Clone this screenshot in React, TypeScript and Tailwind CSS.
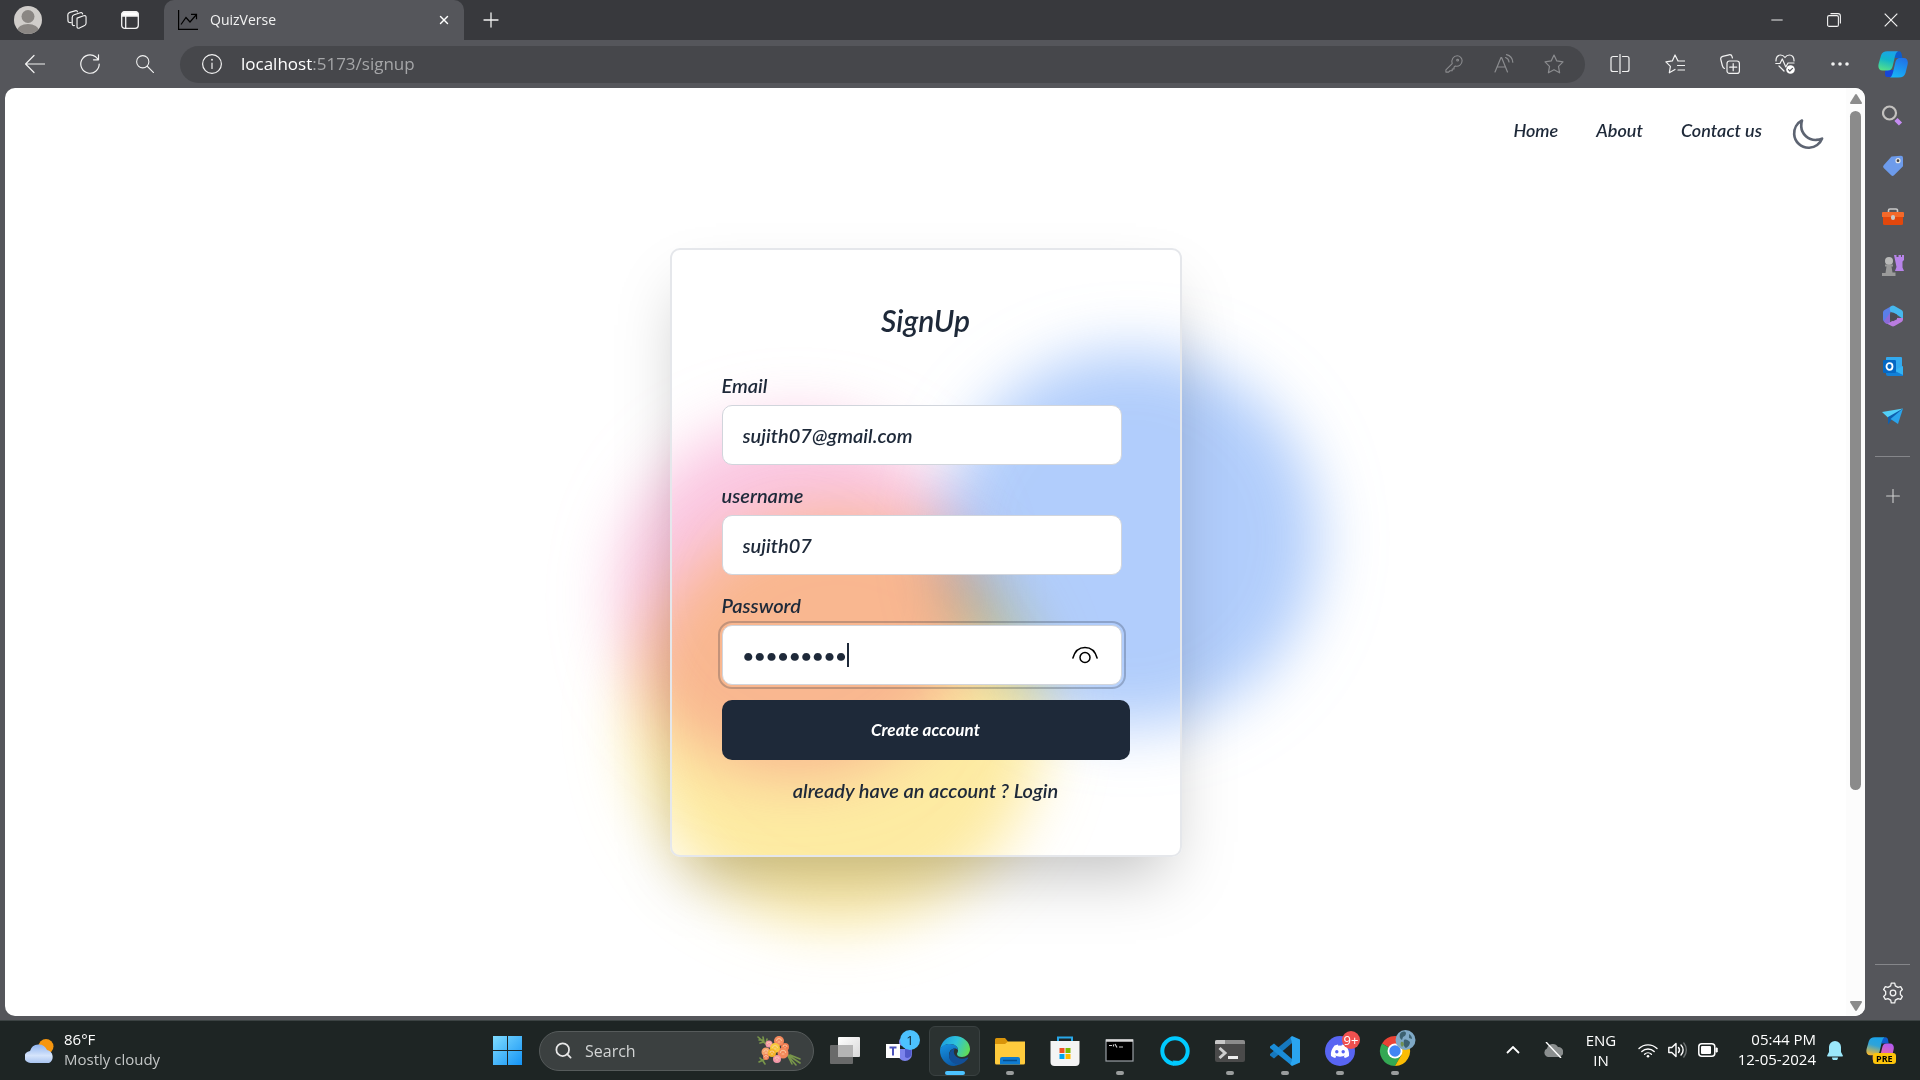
import React from "react";
import { X, Plus, Minus, Search } from "lucide-react";

const line = { fill: "none", stroke: "currentColor", strokeWidth: 1.2, strokeLinecap: "round", strokeLinejoin: "round" } as const;

function Ico({ d, size = 20, children, className = "" }: { d?: string; size?: number; children?: React.ReactNode; className?: string }) {
  return (
    <svg viewBox="0 0 20 20" width={size} height={size} className={className} {...line} aria-hidden="true">
      {d && <path d={d} />}
      {children}
    </svg>
  );
}

const STAR = "M10 1l2.8 5.9 6.2.9-4.5 4.5 1.1 6.5L10 15.7l-5.6 3.1 1.1-6.5L1 7.8l6.2-.9z";

function TabStrip() {
  return (
    <div className="flex h-10 items-end bg-[#38393d] text-[#f2f2f2]">
      <div className="flex h-10 w-[164px] shrink-0 items-center">
        <button aria-label="Profile" className="ml-[14px]">
          <svg viewBox="0 0 28 28" width="28" height="28">
            <clipPath id="av"><circle cx="14" cy="14" r="14" /></clipPath>
            <g clipPath="url(#av)">
              <rect width="28" height="28" fill="#d0cdca" />
              <circle cx="14" cy="10.500" r="6.500" fill="#8a8683" />
              <ellipse cx="14" cy="25" rx="11" ry="7" fill="#8a8683" />
            </g>
          </svg>
        </button>
        <button aria-label="Workspaces" className="ml-[25px]">
          <Ico>
            <path d="M9.500 7.500l7-2.500c1.500-.5 2.500 0 2.500 1.500v6.500c0 1.500-.5 2-2 2.500l-5 2.500c-1.500.5-2.500 0-2.500-1.500V9z" transform="translate(1 1) scale(.95)" />
            <path d="M7.500 15.500c-1.500.3-2.300-.3-2.300-1.800V7.500c0-1.500.5-2.300 2-2.800l6-2c1.300-.4 2.200 0 2.400 1.200M4 12.500c-1.800.3-2.800-.2-3-1.700L.8 5c0-1.500.5-2.300 2-2.700L8 .8c1.300-.4 2.200 0 2.400 1" />
          </Ico>
        </button>
        <button aria-label="Tab actions" className="ml-[34px]">
          <svg viewBox="0 0 18 18" width="18" height="18" fill="none" stroke="#f2f2f2" strokeWidth="1.300">
            <rect x=".7" y=".7" width="16.600" height="16.600" rx="3" />
            <path d="M1 3.500a2.500 2.500 0 012.500-2.500h11a2.500 2.500 0 012.500 2.500V5H1z" fill="#fff" />
            <path d="M4.700 5v12" />
          </svg>
        </button>
      </div>
      <div className="flex h-10 w-[300px] items-center rounded-t-[10px] bg-[#55565b] pl-[14px] pr-[13px]">
        <svg viewBox="0 0 20 20" width="20" height="20" fill="none" stroke="#000" strokeWidth="1.200">
          <path d="M.6 0v19.400H20M3 14.500l5-7 4 4.500 6.500-7.500M13 4.300h5.500v5" />
        </svg>
        <span className="ml-3 pb-px text-[14px]">QuizVerse</span>
        <button aria-label="Close tab" className="ml-auto text-white"><X size={14} strokeWidth={2.400} /></button>
      </div>
      <button aria-label="New tab" className="flex h-10 w-[54px] items-center justify-center"><Plus size={24} strokeWidth={1.300} /></button>
      <div className="mr-px ml-auto flex h-10 items-center">
        <button aria-label="Minimize" className="flex w-[57px] justify-center"><Minus size={18} strokeWidth={1.300} /></button>
        <button aria-label="Restore" className="flex w-[57px] justify-center">
          <svg viewBox="0 0 14 14" width="14" height="14" fill="none" stroke="currentColor" strokeWidth="1.100"><rect x=".6" y="2.600" width="10.800" height="10.800" rx="1.500" /><path d="M3.500.6H11A2.400 2.400 0 0113.400 3v7.500" /></svg>
        </button>
        <button aria-label="Close" className="flex w-[57px] justify-center">
          <svg viewBox="0 0 14 14" width="14" height="14" stroke="currentColor" strokeWidth="1.200"><path d="M.7.7l12.600 12.600M13.300.7L.7 13.300" /></svg>
        </button>
      </div>
    </div>
  );
}

function Copilot({ size, warm = false }: { size: number; warm?: boolean }) {
  const id = warm ? "w" : "c";
  return (
    <svg viewBox="0 0 30 27" width={size} height={size * 0.9} aria-hidden="true">
      <defs>
        <linearGradient id={id + "a"} x1=".6" y1="0" x2=".3" y2="1">
          <stop offset="0" stopColor="#1aa3ea" /><stop offset=".45" stopColor={warm ? "#2fa3d8" : "#12b5c9"} /><stop offset="1" stopColor={warm ? "#f5b82e" : "#54e08a"} />
        </linearGradient>
        <linearGradient id={id + "b"} x1=".7" y1="0" x2=".3" y2="1">
          <stop offset="0" stopColor={warm ? "#b45af0" : "#2072e8"} /><stop offset="1" stopColor={warm ? "#ff6f8a" : "#18b4f8"} />
        </linearGradient>
      </defs>
      <path d="M9 26c-2 0-2.500-3-1.500-7h9l-1.500 7z" fill={warm ? "#f77b4a" : "#1746d8"} />
      <path d="M21 .3c3 .3 2.500 3.500 3.500 6.700h-8L17.500 1z" fill="#0f5ccc" />
      <path d="M9.500.3H21c-2.500 0-3.300 2.500-4.300 6.200l-2 8.500c-.8 3-2 4.500-5.200 4.500H4.500C1 19.500-.3 16.500.7 12.500L3 4.500C4 1.500 6 .3 9.500.3z" fill={`url(#${id}a)`} />
      <path d="M20.500 26.600H11c2.200 0 3.300-2.500 4.200-6.200l2-8.400c.8-3.500 2-5 5.200-5h3.300c3.500 0 4.800 3 3.800 7l-2 8c-1 3-3 4.600-7 4.600z" fill={`url(#${id}b)`} />
    </svg>
  );
}

function Toolbar() {
  return (
    <div className="flex h-12 items-center bg-[#55565b] text-[#f2f2f2]">
      <button aria-label="Back" className="ml-[25px]"><Ico d="M19.500 10H.8M9 1.500L.6 10 9 18.500" /></button>
      <button aria-label="Refresh" className="ml-[35px]"><Ico d="M19.200 10a9.200 9.200 0 11-3.500-7.200l2.500 2.500M18.500.8v5h-5" /></button>
      <button aria-label="Search" className="ml-[36px]"><Ico size={18}><circle cx="7.500" cy="7.500" r="6.800" /><path d="M12.500 12.500l7 7" /></Ico></button>
      <div className="ml-[26px] flex h-[37px] flex-1 items-center rounded-full bg-[#46474b] pl-[22px]">
        <button aria-label="Site information"><Ico><circle cx="10" cy="10" r="9.400" /><path d="M10 9v5.500" /><path d="M10 5.700v.1" strokeWidth="1.800" /></Ico></button>
        <input aria-label="Address" readOnly className="sr-only" value="localhost:5173/signup" />
        <span className="ml-[19px] text-[17px] text-[#a5a6a8]"><span className="text-white">localhost</span>:5173/signup</span>
        <div className="ml-auto flex items-center text-[#8b8c8f]">
          <button aria-label="Password manager" className="mr-[31px]"><Ico size={18}><path d="M1 16.500l7-7c-1.300-4 1.200-8.600 5.600-8.600A5.500 5.500 0 0119 6.500c0 4-3.600 6.700-7.500 5.700L10 13.500v2H8v2H5.500L4 19H1z" /><circle cx="14" cy="5.700" r="1" /></Ico></button>
          <button aria-label="Read aloud" className="mr-[30px]"><Ico d="M1 18L7 3.500h.6L13.500 18M3.200 13h8M11.500 3.500c2 .7 3.300 2.400 3.500 4.500M12.500.6c3.500.9 6 3.800 6.300 7.600" /></button>
          <button aria-label="Add to favorites" className="mr-[21px]"><Ico d={STAR} /></button>
        </div>
      </div>
      <button aria-label="Split screen" className="ml-[25px]"><Ico d="M7.500 2.500H3A2 2 0 001 4.500v11a2 2 0 002 2h4.500M12.500 2.500H17a2 2 0 012 2v11a2 2 0 01-2 2h-4.500M10 .5v19" /></button>
      <button aria-label="Favorites" className="ml-[35px]"><Ico d="M13 7L10 1 7.300 6.900.9 7.800l4.500 4.500-1.100 6.500L10 15.500M13.500 7H19.500M12.500 11.500h7M13 16h6.500" /></button>
      <button aria-label="Collections" className="ml-[35px]"><Ico><rect x="7" y="7" width="12.400" height="12.400" rx="2.500" /><path d="M13.200 9.700v7M9.700 13.200h7M4.500 14.500C3 14 2.700 13 2.300 11.500L.8 5.500C.4 3.800 1 2.800 2.700 2.300L9 .8c1.700-.4 2.700.2 3.100 1.900l.3 1.300" /></Ico></button>
      <button aria-label="Browser essentials" className="ml-[35px]"><Ico><path d="M1 7C.8 3 3 1 5.500 1 7.500 1 9 2 10 3.500 11 2 12.500 1 14.500 1 17 1 19.200 3 19 7M.8 9.500H5L7.300 5l3.500 8 2.200-4h6M4 12l5 5" /><circle cx="15.500" cy="15.500" r="4.300" fill="#fff" stroke="none" /><path d="M13.500 15.700l1.300 1.300 2.700-2.700" stroke="#55565b" /></Ico></button>
      <button aria-label="Settings and more" className="ml-[36px]"><svg viewBox="0 0 18 4" width="18" height="4" fill="currentColor"><circle cx="2" cy="2" r="1.800" /><circle cx="9" cy="2" r="1.800" /><circle cx="16" cy="2" r="1.800" /></svg></button>
      <button aria-label="Copilot" className="ml-[29px] mr-[12px]"><Copilot size={30} /></button>
    </div>
  );
}

const sideIcons: { name: string; art: React.ReactNode }[] = [
  { name: "Search", art: <g fill="none"><circle cx="7.500" cy="8" r="6.500" stroke="#c3c1bf" strokeWidth="2.200" /><path d="M14 14.500l4.500 4.500" stroke="#c58cf2" strokeWidth="4.500" /></g> },
  { name: "Shopping", art: <g><path d="M9.500 1.500L19 .8a2 2 0 012 2v8.500L12 20.300a2 2 0 01-2.800 0L1.700 13a2 2 0 010-2.800z" fill="#6d9beb" /><circle cx="16" cy="5.700" r="2" fill="#444" stroke="#e6e6e6" strokeWidth="1.200" /></g> },
  { name: "Tools", art: <g transform="translate(0 1)"><path d="M6.500 6V4.500a1.500 1.500 0 011.500-1.500h6a1.500 1.500 0 011.500 1.500V6" fill="none" stroke="#c9c9c9" strokeWidth="1.600" /><rect x="1" y="9" width="20" height="10" rx="1.500" fill="#e2470c" /><path d="M0 7a1 1 0 011-1h20a1 1 0 011 1v4H0z" fill="#f3692a" /><rect x="9" y="9" width="4" height="5" rx="2" fill="#c9c9c9" /></g> },
  { name: "Games", art: <g><path d="M12 0h2.500v2h2V0h2.500v2h1V0h2v5l-1.500 1.500v6L22 16h-9l1.500-4z" fill="#b884ea" /><circle cx="7" cy="6" r="4" fill="#b9b9b9" /><path d="M3 9.500h8v2H9.500l1 6h3V21H0v-3h3.500l1-6.500H3z" fill="#9a9a9a" /></g> },
  { name: "Microsoft 365", art: <g><path d="M10 .8L2.500 5A3 3 0 001 7.600v7A3 3 0 002.500 17L8 20V8l3-4z" fill="#5a7fe8" /><path d="M9.500 1a3 3 0 013 0l7 4A3 3 0 0121 7.600V14l-7-5-5-2C7 5 7.500 2 9.500 1z" fill="#46b8ee" /><path d="M21 13v1.500a3 3 0 01-1.500 2.500l-7 4a3 3 0 01-3 0L4 18c3 .3 5-1 6-2l5-3z" fill="#ba7ce0" /><path d="M8 15V8l-6 8c.5 2 2 3 3.500 2.800C7 18.500 8 17 8 15z" fill="#8d6ad8" /><path d="M11 7.500l4 2.200v4.600l-4 2-3-1.800V9.500z" fill="#4b4c52" /></g> },
  { name: "Outlook", art: <g transform="translate(0 1)"><rect x="4" y="1" width="16" height="17" rx="1" fill="#32aaf0" /><path d="M4 14h17v6H6a2 2 0 01-2-2z" fill="#1280d8" /><path d="M21 10v9l-9-4.500z" fill="#33b4f5" /><rect x="1" y="4" width="13" height="13" rx="1.200" fill="#0568c4" /><ellipse cx="7.500" cy="10.500" rx="3" ry="3.300" fill="none" stroke="#fff" strokeWidth="1.800" /></g> },
  { name: "Drop", art: <g transform="translate(0 1)"><path d="M0 6l21-3.500L7 12.500z" fill="#52d0f8" /><path d="M21 2.500L6 11v7.500l3-4z" fill="#0f5fae" /><path d="M21 2.500L16 18l-7.500-5z" fill="#2aa4ec" /></g> },
];

function Gear() {
  const pts: string[] = [];
  for (let i = 0; i < 6; i++) {
    const at = (r: number, deg: number) => {
      const a = ((i * 60 + deg) * Math.PI) / 180;
      return `${(11 + r * Math.cos(a)).toFixed(2)},${(11 + r * Math.sin(a)).toFixed(2)}`;
    };
    pts.push(at(7.5, 12), at(10, 20), at(10, 40), at(7.5, 48));
  }
  return (
    <svg viewBox="0 0 22 22" width="22" height="22" fill="none" stroke="#f2f2f2" strokeWidth="1.300" strokeLinejoin="round">
      <polygon points={pts.join(" ")} /><circle cx="11" cy="11" r="2.800" />
    </svg>
  );
}

function Sidebar() {
  return (
    <aside className="flex w-[55px] shrink-0 flex-col items-center bg-[#55565b]">
      <div className="mt-[17px] flex flex-col gap-[28px]">
        {sideIcons.map((s) => (
          <button key={s.name} aria-label={s.name}><svg viewBox="0 0 22 22" width="22" height="22">{s.art}</svg></button>
        ))}
      </div>
      <div className="mt-[29px] h-px w-[35px] bg-[#85868a]" />
      <button aria-label="Customize" className="mt-[28px] text-[#d0d0d0]"><Plus size={22} strokeWidth={1.200} /></button>
      <div className="mt-auto h-px w-[35px] bg-[#85868a]" />
      <button aria-label="Settings" className="mb-[12px] mt-[17px]"><Gear /></button>
    </aside>
  );
}

const fieldBox = "h-[60px] w-full rounded-[10px] border border-gray-300 bg-white px-5 text-[20px] text-gray-800";

function SignupCard() {
  return (
    <div className="relative mt-[88px] w-[512px]">
      <div className="absolute top-[169px] -left-[54px] size-[360px] rounded-full bg-[#f472b6] opacity-40 mix-blend-multiply blur-[30px]" />
      <div className="absolute top-[103px] left-[273px] size-[376px] rounded-full bg-[#3b82f6] opacity-40 mix-blend-multiply blur-[30px]" />
      <div className="absolute top-[264px] -left-[38px] size-[412px] rounded-full bg-[#facc15] opacity-40 mix-blend-multiply blur-[30px]" />
      <form className="relative flex flex-col rounded-[10px] border-2 border-gray-200 px-[50px] pt-[50px] pb-[49px] shadow-[0_31px_62px_-15px_rgba(0,0,0,0.25)]">
        <h1 className="text-center text-[30px] leading-[40px]">SignUp</h1>
        <div className="mt-[25px] flex w-[400px] flex-col">
          <label htmlFor="email" className="h-[40px] pt-1 leading-[32px]">Email</label>
          <input id="email" type="email" defaultValue="sujith07@gmail.com" className={fieldBox} />
          <label htmlFor="username" className="mt-[10px] h-[40px] pt-1 leading-[32px]">username</label>
          <input id="username" type="text" defaultValue="sujith07" className={fieldBox} />
          <label htmlFor="password" className="mt-[10px] h-[40px] pt-1 leading-[32px]">Password</label>
          <div className="relative">
            <input id="password" type="password" defaultValue="quizverse" className="h-[60px] w-full rounded-[10px] border border-gray-300 bg-white px-5 text-[20px] text-gray-800 outline-2 outline-offset-2 outline-gray-800/25" />
            <span className="absolute top-[18px] left-[125px] h-6 w-[2px] bg-gray-800" />
            <button type="button" aria-label="Show password" className="absolute top-[21px] right-[24px] text-black">
              <svg viewBox="0 0 26 18" width="26" height="18" fill="none" stroke="currentColor" strokeWidth="1.500" strokeLinecap="round"><path d="M.9 12C3 4.500 7.500 1.500 13 1.500S23 4.500 25.100 12" /><circle cx="13" cy="11.500" r="5" /></svg>
            </button>
          </div>
        </div>
        <button type="button" className="mt-[15px] h-[60px] rounded-[10px] bg-gray-800 pb-px text-[17px] font-bold text-white">Create account</button>
        <p className="mt-[14px] text-center leading-[32px]">already have an account ? <a href="#login">Login</a></p>
      </form>
    </div>
  );
}

function Page() {
  return (
    <div className="ml-[5px] flex flex-1 overflow-hidden rounded-[10px] bg-white">
      <div className="flex flex-1 flex-col font-[Lato,sans-serif] text-[20px] font-semibold text-gray-800 italic">
        <nav className="mt-[20px] flex h-[52px] items-center justify-end gap-[38px] pr-[21px] text-[18px]">
          <a href="#home" className="pb-2">Home</a>
          <a href="#about" className="pb-2">About</a>
          <a href="#contact" className="pb-2">Contact us</a>
          <button aria-label="Toggle dark mode" className="-ml-[9px] pb-px text-[#5d6472]">
            <svg viewBox="0 0 512 512" width="34" height="34" fill="none" stroke="currentColor" strokeWidth="40" strokeLinejoin="round"><path d="M160 136c0-30.620 4.510-61.610 16-88C99.570 81.270 48 159.320 48 248c0 119.290 96.710 216 216 216 88.680 0 166.730-51.570 200-128-26.390 11.490-57.380 16-88 16-119.290 0-216-96.710-216-216z" transform="rotate(-3 256 256)" /></svg>
          </button>
        </nav>
        <main className="flex flex-1 flex-col items-center"><SignupCard /></main>
      </div>
      <div className="flex w-[19px] flex-col items-center bg-[#fcfcfc] pt-[6px] pb-[5px]">
        <svg viewBox="0 0 12 10" width="12" height="10" fill="#8b8b8b"><path d="M5 .8a1.200 1.200 0 012 0l4.800 7.700A1 1 0 0111 10H1A1 1 0 01.2 8.500z" /></svg>
        <div className="mt-[7px] h-[74%] w-[11px] rounded-full bg-[#8b8b8b]" />
        <svg viewBox="0 0 12 10" width="12" height="10" fill="#8b8b8b" className="mt-auto rotate-180"><path d="M5 .8a1.200 1.200 0 012 0l4.800 7.700A1 1 0 0111 10H1A1 1 0 01.2 8.500z" /></svg>
      </div>
    </div>
  );
}

function Bouquet() {
  const blooms: [number, number, number, string][] = [
    [22, 6, 5, "#f58a5e"], [28, 12, 4, "#f07a50"], [12, 9, 3.5, "#f497a8"], [9, 17, 4.5, "#f5a06c"], [26, 18, 5.500, "#f4885a"], [20, 24, 4, "#f497a8"], [9, 22, 3, "#f2805c"], [18, 13, 5, "#f8c83c"], [15, 18, 4, "#f3b428"],
  ];
  return (
    <svg viewBox="0 0 44 32" width="44" height="32" aria-hidden="true">
      <g stroke="#78964a" strokeWidth="1.600" fill="none" strokeLinecap="round">
        <path d="M1 2l9 8M3 8l4-1M6 2l1 5M2 5h4M10 4l-1 5M2 27l8-4M3 23l3 3M8 29l-2-3M31 20l12 8M32 22l7 8M33 20l10 4M31 21l4 8" />
      </g>
      {blooms.map(([x, y, r, c], i) => (
        <g key={i}><circle cx={x} cy={y} r={r} fill={c} /><path d={`M${x - r / 2} ${y}a${r / 2} ${r / 2} 0 01${r} 0M${x - r / 4} ${y + 1}h${r / 2}`} stroke="#fbd3a8" strokeWidth=".8" fill="none" /></g>
      ))}
    </svg>
  );
}

const apps: { name: string; state?: "active" | "open"; art: React.ReactNode }[] = [
  { name: "Task view", art: <g><defs><linearGradient id="tv" x1="0" y1="0" x2="1" y2="1"><stop stopColor="#fff" /><stop offset="1" stopColor="#d8d8d8" /></linearGradient></defs><rect x="8" y="1" width="22" height="20" rx="1" fill="url(#tv)" /><rect x="0" y="9" width="23" height="19" rx="1" fill="#777" opacity=".85" /><rect x="8" y="9" width="15" height="12" fill="#b4b4b4" /></g> },
  { name: "Teams", art: <g><path d="M13 13h14v5a7 7 0 01-7 7 7 7 0 01-7-7z" fill="#7b83eb" /><path d="M20 12h6.500v6a4 4 0 01-6.500 3z" fill="#5059c9" /><circle cx="18" cy="6" r="4" fill="#7b83eb" /><rect x="1" y="8" width="14" height="14" fill="#fff" /><path d="M4.500 11.500h7M8 11.500v8" stroke="#4b53bc" strokeWidth="2" /><circle cx="25" cy="4" r="10" fill="#4cc2ff" /><text x="25" y="9" textAnchor="middle" fontSize="13" fill="#10242e">1</text></g> },
  { name: "Edge", state: "active", art: <g><defs><linearGradient id="e1" x1="0" y1=".3" x2="1" y2=".6"><stop stopColor="#1c9de0" /><stop offset=".5" stopColor="#2ec3dc" /><stop offset="1" stopColor="#62dc54" /></linearGradient><linearGradient id="e2" x1=".2" y1="0" x2=".6" y2="1"><stop stopColor="#1690e0" /><stop offset="1" stopColor="#0c59a4" /></linearGradient></defs><path d="M0 14C1 6 7 0 15 0s15 6 15 13c0 5-4 8-8 8-3 0-5-1-5-3 0-1 1-1 1-4 0-3-3-6-8-6-5 0-9 3-10 6z" fill="url(#e1)" /><path d="M0 14c1-4 5-6 10-6 5 0 8 3 8 6-2-3-9-2-9 5 0 6 6 9 11 9a15 15 0 01-6 2C6 30-.5 22 0 14z" fill="url(#e2)" /><path d="M14 12.500c-3 1-5 4-5 7.500 0 5 5 9 11 8.500 3-1 6-3 8-6 .5-.8 0-1.200-.8-.9-5 2.400-10.700 1-12.700-3-1-2-.9-4.400.5-6.100z" fill="#124f97" /></g> },
  { name: "File Explorer", state: "open", art: <g><path d="M0 3.500A1.500 1.500 0 011.500 2H10l3 3.500v4H0z" fill="#d9940a" /><path d="M0 8h10l3-2.500h17V27a1.500 1.500 0 01-1.500 1.500h-27A1.500 1.500 0 010 27z" fill="#ffcb3d" /><path d="M5 28.500V23a2 2 0 012-2h16a2 2 0 012 2v5.500z" fill="#0f7bd0" /><path d="M8 24.500h14" stroke="#064d8c" strokeWidth="1.500" /></g> },
  { name: "Microsoft Store", art: <g><path d="M8 5V1.500h14V5" fill="none" stroke="#28a8e8" strokeWidth="2" /><path d="M.5 5h29v21a4 4 0 01-4 4h-21a4 4 0 01-4-4z" fill="#f4f4f4" /><rect x="9.500" y="12" width="5" height="5" fill="#f25022" /><rect x="15.500" y="12" width="5" height="5" fill="#7fba00" /><rect x="9.500" y="18" width="5" height="5" fill="#00a4ef" /><rect x="15.500" y="18" width="5" height="5" fill="#ffb900" /></g> },
  { name: "Command Prompt", state: "open", art: <g><rect x="1" y="4" width="27" height="21" fill="#000" stroke="#9aa0a5" strokeWidth="1.200" /><path d="M1 4.500h27" stroke="#d8d8d8" strokeWidth="2.500" /><path d="M4 9.500h3M8.500 8.500v2M10 8l2 3.500M14 11h4" stroke="#ccc" strokeWidth="1.200" /></g> },
  { name: "Alexa", art: <g fill="none"><circle cx="15" cy="15" r="12.700" stroke="#00caff" strokeWidth="4" /><path d="M12.500 24.500c1 .8 1.200 3 .3 5.500 2.700-2 5.500-3.700 8-5z" fill="#00caff" /></g> },
  { name: "Terminal", state: "open", art: <g><rect x="0" y="4" width="30" height="22" rx="2" fill="#4a4a4a" /><path d="M2 4h26a2 2 0 012 2v2H0V6a2 2 0 012-2z" fill="#8c8c8c" /><path d="M2 4h8v4H0V6a2 2 0 012-2z" fill="#c8c8c8" /><path d="M4.500 12l5.500 5-5.500 5" fill="none" stroke="#d0d0d0" strokeWidth="3" /><path d="M13 21.500h10" stroke="#eee" strokeWidth="3" /></g> },
  { name: "Visual Studio Code", state: "open", art: <g><path d="M22 6L4 21.500 0 18.500 0 17 21 0z" fill="#1678be" transform="translate(0 1)" /><path d="M22 24L4 8.500 0 11.500 0 13 21 30z" fill="#1a8cd8" transform="translate(0 -1)" /><path d="M22 0l8 3.500v23L22 30l-1.500-1.200L22 22V8l-1.500-6.800z" fill="#2aa5f0" /></g> },
  { name: "Discord", state: "open", art: <g><circle cx="15" cy="15" r="15" fill="#5865f2" /><path d="M20.500 9.500A15 15 0 0017 8.500l-.6 1.200a12 12 0 00-3 0L13 8.500a15 15 0 00-3.500 1C6.500 13 5.500 16.500 6 20c1.500 1 2.800 1.500 4.200 1.900l1-1.500-1.500-.8c3.500 1.500 7.200 1.500 10.600 0l-1.500.8 1 1.500c1.500-.4 2.800-1 4.200-1.900.4-4-.6-7.500-3.500-10.500z" fill="#fff" /><circle cx="11.800" cy="15.800" r="1.700" fill="#5865f2" /><circle cx="18.200" cy="15.800" r="1.700" fill="#5865f2" /><circle cx="26" cy="4" r="9" fill="#f0504f" /><text x="26" y="9" textAnchor="middle" fontSize="13" fill="#fff">9+</text></g> },
  { name: "Chrome", state: "open", art: <g><path d="M15 15L2 7.500a15 15 0 0126 0z" fill="#ea4335" /><path d="M15 15L2 7.500A15 15 0 0015 30l6.500-11.300z" fill="#34a853" /><path d="M15 15h0L28 7.500A15 15 0 0115 30l6.500-11.300z" fill="#fbbc04" /><circle cx="15" cy="15" r="7.500" fill="#fff" /><circle cx="15" cy="15" r="5.700" fill="#4285f4" /><circle cx="25.500" cy="4" r="10" fill="#7fa9c6" /><path d="M20-2c2-3 5-3 6-1 0 2-1 3-3 4l-1 3c-2-1-3-3-2-6zM24 4c2-1 4 0 6 2 0 3-2 5-4 6-2-1-3-4-2-8zM29-2c2 1 3 3 3 5l-3-1z" fill="#3c6170" /><path d="M21 6c2-1 3 1 3 3l-2 2c-1-1-2-3-1-5z" fill="#6f9052" /></g> },
];

function Taskbar() {
  return (
    <footer className="flex h-[60px] border-t border-[#3c4343] bg-[#1e2524] text-[15px] text-white">
      <div className="flex flex-1 items-center pl-[25px]">
        <svg viewBox="0 0 30 26" width="30" height="26" aria-hidden="true">
          <defs><linearGradient id="cl" x1="0" y1="0" x2="0" y2="1"><stop stopColor="#8fb4f0" /><stop offset=".6" stopColor="#d5e4fb" /><stop offset="1" stopColor="#a9c4f0" /></linearGradient></defs>
          <circle cx="21" cy="8.500" r="7.500" fill="#f6960f" />
          <path d="M6 25a6 6 0 01-1-12 9 9 0 0117-1 7 7 0 012 13z" fill="url(#cl)" />
        </svg>
        <div className="ml-[9px] pb-1 leading-5"><div>86°F</div><div className="text-[#c3c6c6]">Mostly cloudy</div></div>
      </div>
      <div className="mr-[43px] flex items-center">
        <button aria-label="Start" className="flex w-[55px] justify-center">
          <svg viewBox="0 0 29 29" width="29" height="29"><defs><linearGradient id="win" x1="0" y1="0" x2="1" y2="1"><stop stopColor="#7fdcff" /><stop offset="1" stopColor="#1493f5" /></linearGradient></defs><path d="M0 0h14v14H0zM15 0h14v14H15zM0 15h14v14H0zM15 15h14v14H15z" fill="url(#win)" /></svg>
        </button>
        <label className="ml-1 flex h-10 w-[275px] items-center rounded-full border border-[#565b5b] bg-[#3b4040] pr-3 pl-[14px]">
          <Search size={19} strokeWidth={2.200} className="text-[#e8e8e8]" />
          <input type="text" placeholder="Search" aria-label="Search" className="ml-3 w-0 flex-1 bg-transparent text-[16px] placeholder:text-[#d2d4d4]" />
          <Bouquet />
        </label>
        <div className="ml-[3px] flex">
          {apps.map((a) => (
            <button key={a.name} aria-label={a.name} className={a.state === "active" ? "mx-[2px] flex h-[50px] w-[51px] flex-col items-center rounded-md border border-[#3a4141] bg-[#2b3231] pt-[9px]" : "flex h-[50px] w-[55px] flex-col items-center pt-[10px]"}>
              <svg viewBox="0 0 30 30" width="30" height="30" className="shrink-0 overflow-visible">{a.art}</svg>
              {a.state === "active" && <span className="mt-[5px] h-1 w-5 shrink-0 rounded-full bg-[#4cc2ff]" />}
              {a.state === "open" && <span className="mt-[5px] h-1 w-2 shrink-0 rounded-full bg-[#9a9d9d]" />}
            </button>
          ))}
        </div>
      </div>
      <div className="flex flex-1 items-center justify-end pb-px">
        <svg viewBox="0 0 14 8" width="14" height="8" fill="none" stroke="#fff" strokeWidth="1.800"><path d="M1 7l6-6 6 6" /></svg>
        <svg viewBox="0 0 20 16" width="20" height="16" className="ml-[23px]"><path d="M5 15A4.500 4.500 0 014 6.500 6 6 0 0115 5a4.800 4.800 0 01.5 10z" fill="#8a8e8e" /><path d="M3 0l15 16" stroke="#fff" strokeWidth="1.400" /></svg>
        <div className="ml-[22px] w-[32px] text-center leading-5"><div>ENG</div><div>IN</div></div>
        <svg viewBox="0 0 20 15" width="20" height="15" fill="none" stroke="#fff" strokeWidth="1.400" strokeLinecap="round" className="ml-[21px]"><path d="M1 5.500a13 13 0 0118 0M3.800 8.500a9 9 0 0112.400 0M6.600 11.200a5 5 0 016.800 0" /><circle cx="10" cy="13.200" r="1.300" fill="#fff" stroke="none" /></svg>
        <svg viewBox="0 0 20 16" width="20" height="16" fill="none" stroke="#fff" strokeWidth="1.400" strokeLinecap="round" strokeLinejoin="round" className="ml-[10px]"><path d="M.8 5.500h3L8 1.500v13L3.800 10.500h-3zM10.500 5.500a4 4 0 010 5M13 3a7 7 0 010 10" /><path d="M15.800 1a11 11 0 010 14" stroke="#6d7272" /></svg>
        <svg viewBox="0 0 20 14" width="20" height="14" className="ml-[10px]"><rect x=".8" y=".8" width="16" height="12.400" rx="3" fill="none" stroke="#fff" strokeWidth="1.500" /><rect x="3" y="3" width="10" height="8" rx="1" fill="#fff" /><path d="M18 5h1.200v4H18z" fill="#fff" stroke="#fff" /></svg>
        <div className="ml-[18px] w-[80px] pb-[3px] text-right leading-5"><div>05:44 PM</div><div>12-05-2024</div></div>
        <svg viewBox="0 0 16 19" width="16" height="19" className="ml-[11px]" fill="#9be8fb"><path d="M8 0a6 6 0 016 6v5l1.800 3.500a.7.7 0 01-.6 1H.8a.7.7 0 01-.6-1L2 11V6a6 6 0 016-6zM5 16.500h6a3 3 0 01-6 0z" /></svg>
        <div className="relative mr-[26px] ml-[23px]">
          <Copilot size={28} warm />
          <span className="absolute top-[16px] left-[7px] rounded-[3px] bg-[#fdc40b] px-[3px] text-[9px] leading-[11px] font-bold text-black">PRE</span>
        </div>
      </div>
    </footer>
  );
}

export default function App() {
  return (
    <div className="flex min-h-screen flex-col bg-[#55565b] font-['Open_Sans','Noto_Sans',sans-serif]">
      <TabStrip />
      <Toolbar />
      <div className="flex flex-1 pb-1"><Page /><Sidebar /></div>
      <Taskbar />
    </div>
  );
}
